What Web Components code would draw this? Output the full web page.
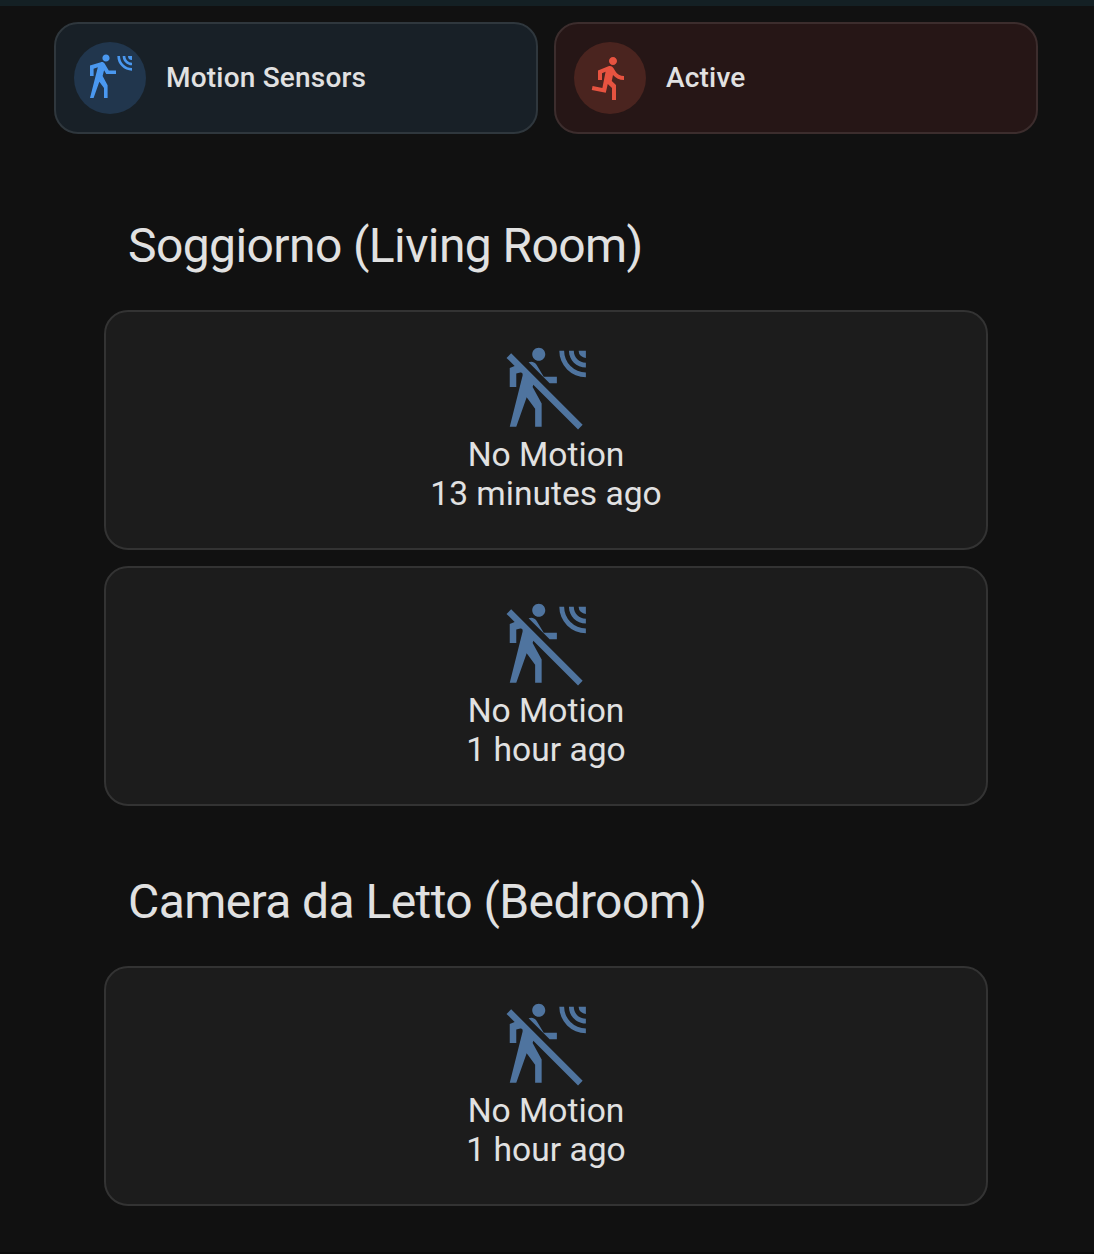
<!DOCTYPE html>
<html lang="en">
<head>
<meta charset="utf-8">
<title>Motion Sensors</title>
<style>
html,body{margin:0;background:#111;}
body{height:1254px;overflow:hidden;font-family:Roboto,"Liberation Sans",sans-serif;color:#e1e1e1;}
</style>
</head>
<body>
<motion-dashboard>
  <state-chip slot="chips" tone="blue" icon="sensor">Motion Sensors</state-chip>
  <state-chip slot="chips" tone="red" icon="run">Active</state-chip>
  <room-section>
    <span slot="title">Soggiorno (Living Room)</span>
    <sensor-card><span slot="state">No Motion</span><span slot="time">13 minutes ago</span></sensor-card>
    <sensor-card><span slot="state">No Motion</span><span slot="time">1 hour ago</span></sensor-card>
  </room-section>
  <room-section>
    <span slot="title">Camera da Letto (Bedroom)</span>
    <sensor-card><span slot="state">No Motion</span><span slot="time">1 hour ago</span></sensor-card>
  </room-section>
</motion-dashboard>
<script>
const WAVES = 'M15.67,1A7.33,7.33 0 0,0 23,8.33V7A6,6 0 0,1 17,1H15.67M18.33,1C18.33,3.58 20.42,5.67 23,5.67V4.33C21.16,4.33 19.67,2.84 19.67,1H18.33M21,1A2,2 0 0,0 23,3V1H21';
const HEAD = 'M10,0.2C9,0.2 8.2,1 8.2,2C8.2,3 9,3.8 10,3.8C11,3.8 11.8,3 11.8,2C11.8,1 11,0.2 10,0.2';
const ICONS = {
  sensor: HEAD + WAVES + 'M7.92,4.03C7.75,4.03 7.58,4.06 7.42,4.11L2,5.8V11H3.8V7.33L5.91,6.67L2,22H3.8L6.67,13.89L9,17V22H10.8V15.59L8.31,11.05L9.04,8.18L10.12,10H15V8.2H11.38L9.38,4.87C9.08,4.37 8.54,4.03 7.92,4.03Z',
  run: 'M13.5,5.5C14.59,5.5 15.5,4.58 15.5,3.5C15.5,2.38 14.59,1.5 13.5,1.5C12.39,1.5 11.5,2.38 11.5,3.5C11.5,4.58 12.39,5.5 13.5,5.5M9.89,19.38L10.89,15L13,17V23H15V15.5L12.89,13.5L13.5,10.5C14.79,12 16.79,13 19,13V11C17.09,11 15.5,10 14.69,8.58L13.69,7C13.29,6.38 12.69,6 12,6C11.69,6 11.5,6.08 11.19,6.08L6,8.28V13H8V9.58L9.79,8.88L8.19,17L3.29,16L2.89,18L9.89,19.38Z',
  off: HEAD + WAVES + 'M7.2,4.2C7.8,3.95 8.7,3.9 9.38,4.87L11.38,8.2H15V10H13Z' +
    'M2.39,1.73L22.11,21.46L20.84,22.73L8.5,10.4L8.31,11.05L10.8,15.59V22H9V17L6.67,13.89L3.8,22H2L5.5,8.1C5.7,7.3 5.4,6.95 4.9,7.05L3.8,7.33V11H2V5.8L3.35,5.24L1.11,3Z'
};
class MdiIcon extends HTMLElement {
  connectedCallback() {
    this.attachShadow({mode:'open'}).innerHTML =
      `<style>:host{display:block}svg{display:block;width:100%;height:100%;fill:currentColor}</style>
       <svg viewBox="0 0 24 24" aria-hidden="true"><path d="${ICONS[this.getAttribute('name')]}"/></svg>`;
  }
}
class StateChip extends HTMLElement {
  connectedCallback() {
    this.attachShadow({mode:'open'}).innerHTML =
      `<style>
        :host{display:flex;flex:1;align-items:center;gap:20px;height:112px;box-sizing:border-box;padding:0 18px;border:2px solid #2f373d;border-radius:24px;background:#182027;font-size:28px;font-weight:500;letter-spacing:.2px;line-height:40px}
        :host([tone=red]){background:#261616;border-color:#3c2d2d}
        .disc{display:flex;align-items:center;justify-content:center;width:72px;height:72px;border-radius:50%;background:#21364d;color:#4a98f0}
        :host([tone=red]) .disc{background:#4a241f;color:#e75340}
        mdi-icon{width:48px;height:48px}
      </style><div class="disc"><mdi-icon name="${this.getAttribute('icon')}"></mdi-icon></div><div><slot></slot></div>`;
  }
}
class SensorCard extends HTMLElement {
  connectedCallback() {
    this.attachShadow({mode:'open'}).innerHTML =
      `<style>
        :host{display:flex;flex-direction:column;align-items:center;height:240px;box-sizing:border-box;padding-top:35px;border:2px solid #333;border-radius:24px;background:#1c1c1c;font-size:33.6px;line-height:39px}
        mdi-icon{width:88px;height:87px;margin-bottom:1px;color:#4f749f}
      </style><mdi-icon name="off"></mdi-icon><slot name="state"></slot><slot name="time"></slot>`;
  }
}
class RoomSection extends HTMLElement {
  connectedCallback() {
    this.attachShadow({mode:'open'}).innerHTML =
      `<style>
        :host{display:block}
        h2{box-sizing:border-box;height:160px;margin:0;padding:64px 24px 0;font-size:48px;font-weight:400;letter-spacing:-.59px;line-height:64px}
        .cards{display:flex;flex-direction:column;gap:16px}
      </style><h2><slot name="title"></slot></h2><div class="cards"><slot></slot></div>`;
  }
}
class MotionDashboard extends HTMLElement {
  connectedCallback() {
    this.attachShadow({mode:'open'}).innerHTML =
      `<style>
        :host{display:block;box-sizing:border-box;height:1254px;border-top:6px solid #142024;border-bottom:2px solid #0b0b0b}
        .chips{display:flex;gap:16px;padding:16px 56px 0 54px}
        .rooms{padding:16px 106px 0 104px}
      </style><div class="chips"><slot name="chips"></slot></div><div class="rooms"><slot></slot></div>`;
  }
}
customElements.define('mdi-icon', MdiIcon);
customElements.define('state-chip', StateChip);
customElements.define('sensor-card', SensorCard);
customElements.define('room-section', RoomSection);
customElements.define('motion-dashboard', MotionDashboard);
</script>
</body>
</html>
